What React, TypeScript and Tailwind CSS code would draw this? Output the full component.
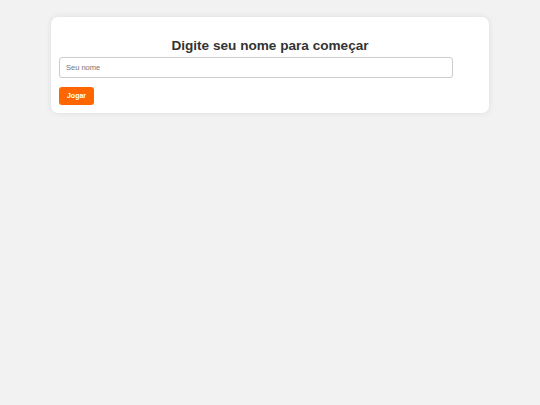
import React from 'react';

export default function App() {
  return (
    <div className="min-h-[405px] w-full bg-[#f2f2f2] pt-[17px]" style={{ fontFamily: '"Liberation Sans", Arial, sans-serif' }}>
      <div className="mx-auto w-[438px] h-[96px] bg-white rounded-[7px] shadow-[0_0_6px_rgba(0,0,0,0.09)] px-[8px] pt-[19px]">
        <h2 className="text-center text-[13.6px] font-bold text-[#333333] leading-[19px] mb-[2px]">
          Digite seu nome para começar
        </h2>
        <input
          type="text"
          placeholder="Seu nome"
          className="block w-[394px] h-[21px] border border-[#cccccc] rounded-[3px] px-[6px] text-[7.5px] text-[#333] placeholder:text-[#757575] outline-none"
        />
        <button className="mt-[9px] w-[35px] h-[18px] bg-[#ff6600] text-white text-[7px] font-bold rounded-[3px]">
          Jogar
        </button>
      </div>
    </div>
  );
}
